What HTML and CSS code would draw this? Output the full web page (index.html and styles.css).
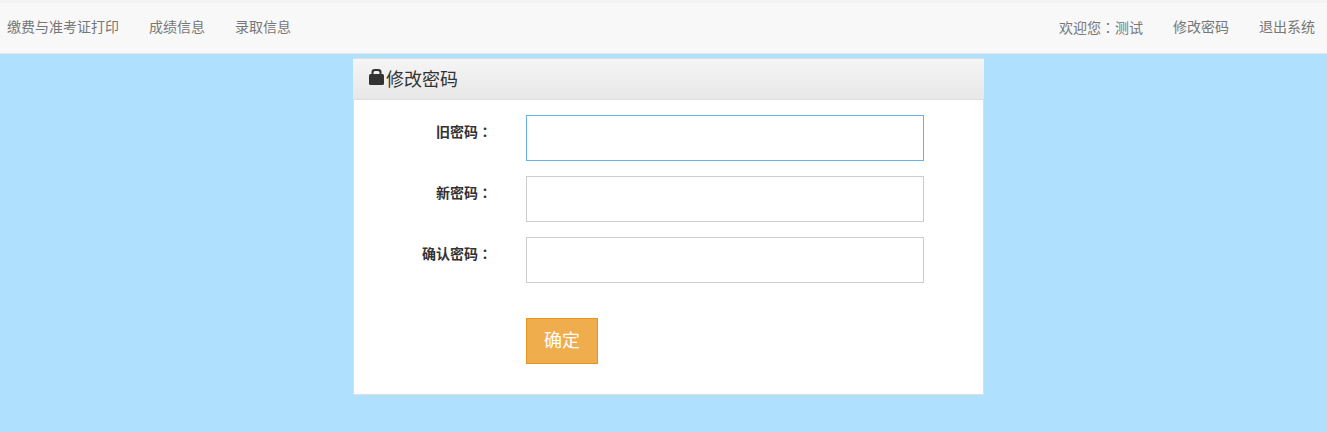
FILE: index.html
```html
<!DOCTYPE html>
<html lang="zh-CN">
<head>
<meta charset="utf-8">
<title>修改密码</title>
<link rel="stylesheet" href="styles.css">
</head>
<body>
<nav class="navbar">
  <ul class="nav-group">
    <li><a href="#">缴费与准考证打印</a></li>
    <li><a href="#">成绩信息</a></li>
    <li><a href="#">录取信息</a></li>
  </ul>
  <ul class="nav-group">
    <li><a href="#">欢迎您<span class="colon" lang="zh-TW">：</span>测试</a></li>
    <li><a href="#">修改密码</a></li>
    <li><a href="#">退出系统</a></li>
  </ul>
</nav>
<main class="panel">
  <header class="panel-heading">
    <svg class="lock" viewBox="0 0 15 16" width="15" height="16" aria-hidden="true">
      <path d="M2.500 6V3a3 3 0 0 1 3-3h4a3 3 0 0 1 3 3v3h-2V3.500A1.500 1.500 0 0 0 9 2H6a1.500 1.500 0 0 0-1.500 1.500V6z" fill="#333"/>
      <rect x="0" y="5" width="15" height="11" rx="1.500" fill="#333"/>
    </svg>
    <span class="panel-title">修改密码</span>
  </header>
  <form class="panel-body">
    <div class="form-row">
      <label class="form-label">旧密码<span class="colon" lang="zh-TW">：</span></label>
      <input class="form-input form-input-focus" type="password">
    </div>
    <div class="form-row">
      <label class="form-label">新密码<span class="colon" lang="zh-TW">：</span></label>
      <input class="form-input" type="password">
    </div>
    <div class="form-row">
      <label class="form-label">确认密码<span class="colon" lang="zh-TW">：</span></label>
      <input class="form-input" type="password">
    </div>
    <div class="form-actions">
      <button class="btn" type="button">确定</button>
    </div>
  </form>
</main>
</body>
</html>
```
FILE: styles.css
```css
* {
  box-sizing: border-box;
}
html, body {
  margin: 0;
  padding: 0;
}
body {
  height: 432px;
  overflow: hidden;
  background: #afe1ff;
  font-family: "Liberation Sans", "Noto Sans CJK SC", sans-serif;
  font-size: 14px;
  color: #333;
}
.colon {
  font-family: "Noto Sans CJK TC", sans-serif;
}
.navbar {
  display: flex;
  justify-content: space-between;
  height: 54px;
  padding: 0 12px 0 7px;
  background: #f8f8f8;
  border-top: 3px solid #f3f3f3;
  border-bottom: 1px solid #e7e7e7;
}
.nav-group {
  display: flex;
  gap: 30px;
  margin: 0;
  padding: 0;
  list-style: none;
}
.nav-group a {
  display: block;
  line-height: 48px;
  color: #777;
  text-decoration: none;
}
.panel {
  width: 631px;
  height: 337px;
  margin: 4px 0 0 353px;
  background: #fff;
  border: 1px solid #ddd;
  border-top: 0;
}
.panel-heading {
  display: flex;
  align-items: center;
  height: 42px;
  margin: 0 -1px;
  padding: 0 0 3px 16px;
  background: linear-gradient(to bottom, #f5f5f5, #e8e8e8);
  border: 1px solid #ddd;
  border-width: 1px 0;
}
.lock {
  display: block;
  margin-top: -1px;
}
.panel-title {
  margin-left: 2px;
  font-size: 18px;
  color: #333;
}
.panel-body {
  padding: 15px 0 0;
}
.form-row {
  display: flex;
  margin-bottom: 15px;
}
.form-label {
  width: 138px;
  margin-right: 34px;
  padding-top: 6px;
  text-align: right;
  font-weight: bold;
  line-height: 20px;
}
.form-input {
  display: block;
  width: 398px;
  height: 46px;
  padding: 6px 12px;
  background: #fff;
  border: 1px solid #ccc;
  outline: none;
}
.form-input-focus {
  border-color: #66afe9;
}
.form-actions {
  padding: 20px 0 0 172px;
}
.btn {
  display: block;
  width: 72px;
  height: 46px;
  padding: 0 0 4px;
  background: #f0ad4e;
  border: 1px solid #e8951f;
  color: #fff;
  font-family: inherit;
  font-size: 18px;
}
```
